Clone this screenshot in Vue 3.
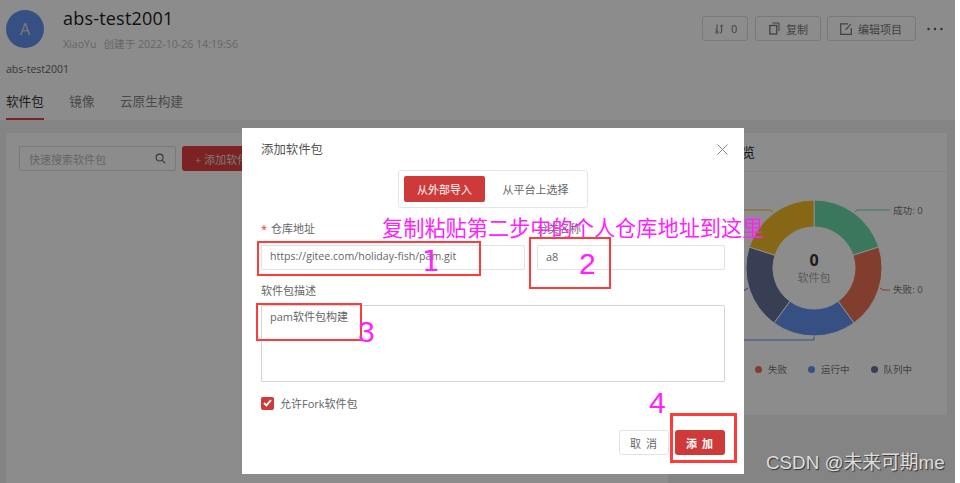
<script setup>
const arcs = [
  { c: '#6ad9a9', d: 'M814 200A68 68 0 0 1 878.7 247L853 255.3A41 41 0 0 0 814 227Z' },
  { c: '#ec7052', d: 'M878.7 247A68 68 0 0 1 854 323L838.1 301.2A41 41 0 0 0 853 255.3Z' },
  { c: '#6592ee', d: 'M854 323A68 68 0 0 1 774 323L789.9 301.2A41 41 0 0 0 838.1 301.2Z' },
  { c: '#66749c', d: 'M774 323A68 68 0 0 1 749.3 247L775 255.3A41 41 0 0 0 789.9 301.2Z' },
  { c: '#f5bc28', d: 'M749.3 247A68 68 0 0 1 814 200L814 227A41 41 0 0 0 775 255.3Z' },
]
</script>

<template>
  <div class="page">
    <header class="head">
      <div class="head-top">
        <div class="avatar">A</div>
        <div class="meta">
          <h1>abs-test2001</h1>
          <p><span>XiaoYu</span><span>创建于 2022-10-26 14:19:56</span></p>
        </div>
        <div class="actions">
          <button class="act a1">
            <svg width="9" height="10" viewBox="0 0 9 10" fill="none" stroke="currentColor"><path d="M2 .5v6M.7 5.3 2 6.6M6.6 8V1.5M5.2 2.4 6.6 1 8 2.4"/><circle cx="2" cy="8.2" r="1.2"/><path d="M6.6 8Q6.4 9 4.8 9"/></svg>
            0
          </button>
          <button class="act a2">
            <svg width="11" height="13" viewBox="0 0 11 13" fill="none" stroke="currentColor"><rect x=".8" y="3.5" width="7" height="8.5" stroke-width="1.3"/><path d="M3.5 1h6.5v8"/></svg>
            复制
          </button>
          <button class="act a3">
            <svg width="12" height="12" viewBox="0 0 12 12" fill="none" stroke="currentColor" stroke-width="1.2"><path d="M8 .8H.7v10.5h10.6V5M5.5 6.8 10.8 1.2"/></svg>
            编辑项目
          </button>
          <svg class="more" width="16" height="4" viewBox="0 0 16 4" fill="#555"><circle cx="1.5" cy="2" r="1.2"/><circle cx="8" cy="2" r="1.2"/><circle cx="14.5" cy="2" r="1.2"/></svg>
        </div>
      </div>
      <div class="desc">abs-test2001</div>
      <nav class="tabs">
        <span class="tab on">软件包</span>
        <span class="tab">镜像</span>
        <span class="tab">云原生构建</span>
      </nav>
    </header>

    <main class="body">
      <section class="card left">
        <div class="search">
          <span>快速搜索软件包</span>
          <svg width="11" height="11" viewBox="0 0 12 12" fill="none" stroke="#666" stroke-width="1.2"><circle cx="5" cy="5" r="3.8"/><path d="m8 8 3.2 3.2"/></svg>
        </div>
        <button class="add">+ 添加软件包</button>
      </section>
      <section class="card right">
        <div class="card-title">构建概览</div>
        <div class="chart">
          <svg class="donut" width="250" height="180" viewBox="689 190 250 180">
            <path d="M855 212l2-2h33" fill="none" stroke="#6ad9a9" />
            <path d="M880 288l3 2h7" fill="none" stroke="#ec7052" />
            <path d="M814 336v4h-125" fill="none" stroke="#6592ee" />
            <path d="M748 288l-3 2h-56" fill="none" stroke="#66749c" />
            <path d="M773 212l-2-2h-82" fill="none" stroke="#f5bc28" />
            <path v-for="a in arcs" :key="a.c" :d="a.d" :fill="a.c" stroke="#fff" stroke-width="1" />
            <text x="893" y="214" class="lab">成功: 0</text>
            <text x="893" y="293" class="lab">失败: 0</text>
            <text x="814" y="266" class="num" text-anchor="middle">0</text>
            <text x="814" y="282" class="sub" text-anchor="middle">软件包</text>
          </svg>
          <div class="legend">
            <span><i class="d1"></i>失败</span>
            <span><i class="d2"></i>运行中</span>
            <span><i class="d3"></i>队列中</span>
          </div>
        </div>
      </section>
    </main>

    <div class="mask"></div>

    <div class="modal">
      <div class="modal-head">
        <span>添加软件包</span>
        <svg width="11" height="11" viewBox="0 0 11 11" stroke="#888" fill="none"><path d="m.5.5 10 10M10.5.5l-10 10"/></svg>
      </div>
      <div class="seg-wrap">
        <div class="seg">
          <span class="seg-on">从外部导入</span>
          <span class="seg-off">从平台上选择</span>
        </div>
      </div>
      <div class="row">
        <label class="field f1">
          <span class="lbl"><em>*</em> 仓库地址</span>
          <span class="input url">https://gitee.com/holiday-fish/pam.git</span>
        </label>
        <label class="field f2">
          <span class="lbl">分类名称</span>
          <span class="input">a8</span>
        </label>
      </div>
      <div class="field f3">
        <span class="lbl">软件包描述</span>
        <span class="area">pam软件包构建</span>
      </div>
      <div class="check">
        <span class="box"><svg width="9" height="8" viewBox="0 0 9 8" fill="none" stroke="#fff" stroke-width="1.8"><path d="m1 4 2.4 2.4L8 1.2"/></svg></span>
        允许Fork软件包
      </div>
      <div class="foot">
        <button class="cancel">取 消</button>
        <button class="ok">添 加</button>
      </div>
    </div>

    <div class="note hint">复制粘贴第二步中的个人仓库地址到这里</div>
    <div class="mark m1"></div><div class="num-a n1">1</div>
    <div class="mark m2"></div><div class="num-a n2">2</div>
    <div class="mark m3"></div><div class="num-a n3">3</div>
    <div class="mark m4"></div><div class="num-a n4">4</div>
    <div class="wm">CSDN @未来可期me</div>
  </div>
</template>

<style scoped>
.page { position: relative; width: 955px; height: 483px; overflow: hidden; background: #fff; font-family: "Open Sans", "Noto Sans CJK SC", sans-serif; color: #333; }
button { font-family: inherit; }
.head { height: 120px; padding: 0 0 0 6px; box-sizing: border-box; display: flex; flex-direction: column; }
.head-top { display: flex; align-items: flex-start; padding: 10px 12px 0 0; height: 50px; box-sizing: content-box; }
.avatar { width: 38px; height: 38px; border-radius: 50%; background: #6592ee; color: #ddd; font-size: 16px; display: flex; align-items: center; justify-content: center; margin-right: 19px; }
.meta h1 { margin: -1px 0 0; font-size: 18px; line-height: 18px; font-weight: 400; color: #222; letter-spacing: .2px; }
.meta p { margin: 10px 0 0; font-size: 10.6px; line-height: 14px; color: #bbb; display: flex; gap: 7px; }
.actions { margin-left: auto; display: flex; gap: 7px; align-items: center; padding-top: 6px; }
.act { height: 25px; padding: 0; display: flex; align-items: center; background: #fff; border: 1px solid #ddd; border-radius: 3px; font-size: 11px; color: #777; box-sizing: border-box; }
.a1 { width: 46px; padding-left: 12px; gap: 7px; }
.a2 { width: 66px; padding-left: 13px; gap: 6px; }
.a3 { width: 89px; padding-left: 12px; gap: 6px; margin-left: -1px; }
.more { margin-left: 4px; }
.desc { margin-top: 2px; font-size: 10.5px; line-height: 14px; color: #666; }
.tabs { display: flex; gap: 25.5px; margin-top: 17px; }
.tab { font-size: 12.6px; line-height: 18px; color: #888; padding-bottom: 7px; }
.tab.on { color: #333; border-bottom: 2px solid #e03e3e; }
.body { height: 363px; background: #f0f1f3; padding: 13px 8px 0 6px; box-sizing: border-box; display: flex; align-items: flex-start; gap: 21px; }
.card { background: #fff; }
.left { width: 662px; height: 350px; padding: 13px; box-sizing: border-box; display: flex; gap: 6px; align-items: flex-start; }
.search { width: 157px; height: 25px; border: 1px solid #ddd; border-radius: 2px; padding: 0 9px; box-sizing: border-box; display: flex; align-items: center; justify-content: space-between; font-size: 11px; color: #bbb; }
.add { width: 100px; height: 25px; background: #e33e3e; color: #ddd; border: 0; border-radius: 3px; font-size: 11px; text-align: left; padding-left: 13px; }
.right { flex: 1; height: 282px; }
.card-title { height: 38px; line-height: 38px; padding-left: 14px; font-size: 13px; border-bottom: 1px solid #eee; color: #222; }
.chart { position: relative; height: 243px; }
.donut { position: absolute; left: 0; top: 18px; }
.lab { font-size: 9.6px; fill: #777; }
.num { font-size: 16px; font-weight: 700; fill: #333; }
.sub { font-size: 11px; fill: #aaa; }
.legend { position: absolute; left: 66px; top: 190px; display: flex; gap: 21px; font-size: 9.5px; color: #777; white-space: nowrap; }
.legend span { display: flex; align-items: center; gap: 6px; }
.legend i { width: 7px; height: 7px; border-radius: 50%; }
.d1 { background: #ec7052; } .d2 { background: #6592ee; } .d3 { background: #66749c; }

.mask { position: absolute; inset: 0; background: rgba(0,0,0,.45); }

.modal { position: absolute; left: 242px; top: 128px; width: 502px; height: 346px; background: #fff; padding: 0 19px; box-sizing: border-box; display: flex; flex-direction: column; font-size: 11px; color: #666; }
.modal-head { display: flex; justify-content: space-between; align-items: center; height: 42px; font-size: 12.4px; color: #555; }
.modal-head svg { margin-right: -3px; }
.seg-wrap { display: flex; justify-content: center; }
.seg { width: 190px; height: 38px; border: 1px solid #e5e5e5; border-radius: 3px; padding: 5px; box-sizing: border-box; display: flex; align-items: center; }
.seg span { height: 26px; display: flex; align-items: center; justify-content: center; font-size: 11px; border-radius: 2px; }
.seg-on { width: 81px; background: #ce3a3a; color: #fff; }
.seg-off { flex: 1; color: #666; padding-left: 4px; }
.row { display: flex; gap: 12px; margin-top: 10px; }
.field { display: flex; flex-direction: column; }
.lbl { height: 22px; line-height: 22px; font-size: 11px; margin-bottom: 5px; }
.lbl em { color: #e33; font-style: normal; margin-right: 1px; }
.f1 { width: 264px; }
.f2 { width: 188px; }
.input { height: 25px; line-height: 21px; border: 1px solid #e2e2e2; border-radius: 1px; padding: 0 8px; box-sizing: border-box; color: #666; white-space: nowrap; }
.url { font-size: 10.6px; }
.f3 { margin-top: 8px; }
.f3 .lbl { height: 25px; line-height: 25px; margin-bottom: 2px; }
.area { height: 77px; border: 1px solid #d5d5d5; border-radius: 1px; padding: 3px 8px; box-sizing: border-box; color: #666; line-height: 16px; }
.check { display: flex; align-items: center; gap: 6px; margin-top: 13px; }
.box { width: 13px; height: 13px; background: #ce3a3a; border-radius: 2px; display: flex; align-items: center; justify-content: center; }
.foot { margin-top: auto; margin-bottom: 19px; display: flex; justify-content: flex-end; gap: 6px; }
.foot button { width: 50px; height: 25px; border-radius: 3px; font-size: 11px; letter-spacing: 1px; }
.cancel { background: #fff; border: 1px solid #e2e2e2; color: #666; }
.ok { background: #ce3a3a; border: 0; color: #fff; font-weight: 700; }

.hint { position: absolute; left: 382px; top: 213px; font-size: 21.2px; line-height: 28px; color: #ff22ff; white-space: nowrap; font-family: "Noto Sans CJK SC", sans-serif; }
.mark { position: absolute; border: 2px solid #ff3b3b; box-sizing: border-box; }
.m1 { left: 257px; top: 241px; width: 224px; height: 35px; }
.m2 { left: 529px; top: 237px; width: 82px; height: 52px; }
.m3 { left: 256px; top: 303px; width: 106px; height: 38px; }
.m4 { left: 670px; top: 413px; width: 67px; height: 50px; border-width: 3px; }
.num-a { position: absolute; color: #ff22ff; font-size: 30px; line-height: 30px; font-family: "Liberation Sans", sans-serif; }
.n1 { left: 422px; top: 247px; font-family: "DejaVu Sans", sans-serif; font-size: 28px; }
.n2 { left: 579px; top: 249px; }
.n3 { left: 358px; top: 317px; }
.n4 { left: 649px; top: 388px; }
.wm { position: absolute; left: 766px; top: 451px; font-size: 18.8px; line-height: 24px; color: #ddd; text-shadow: 1px 1px 1px #333; white-space: nowrap; font-family: "Liberation Sans", "Noto Sans CJK SC", sans-serif; }
</style>
